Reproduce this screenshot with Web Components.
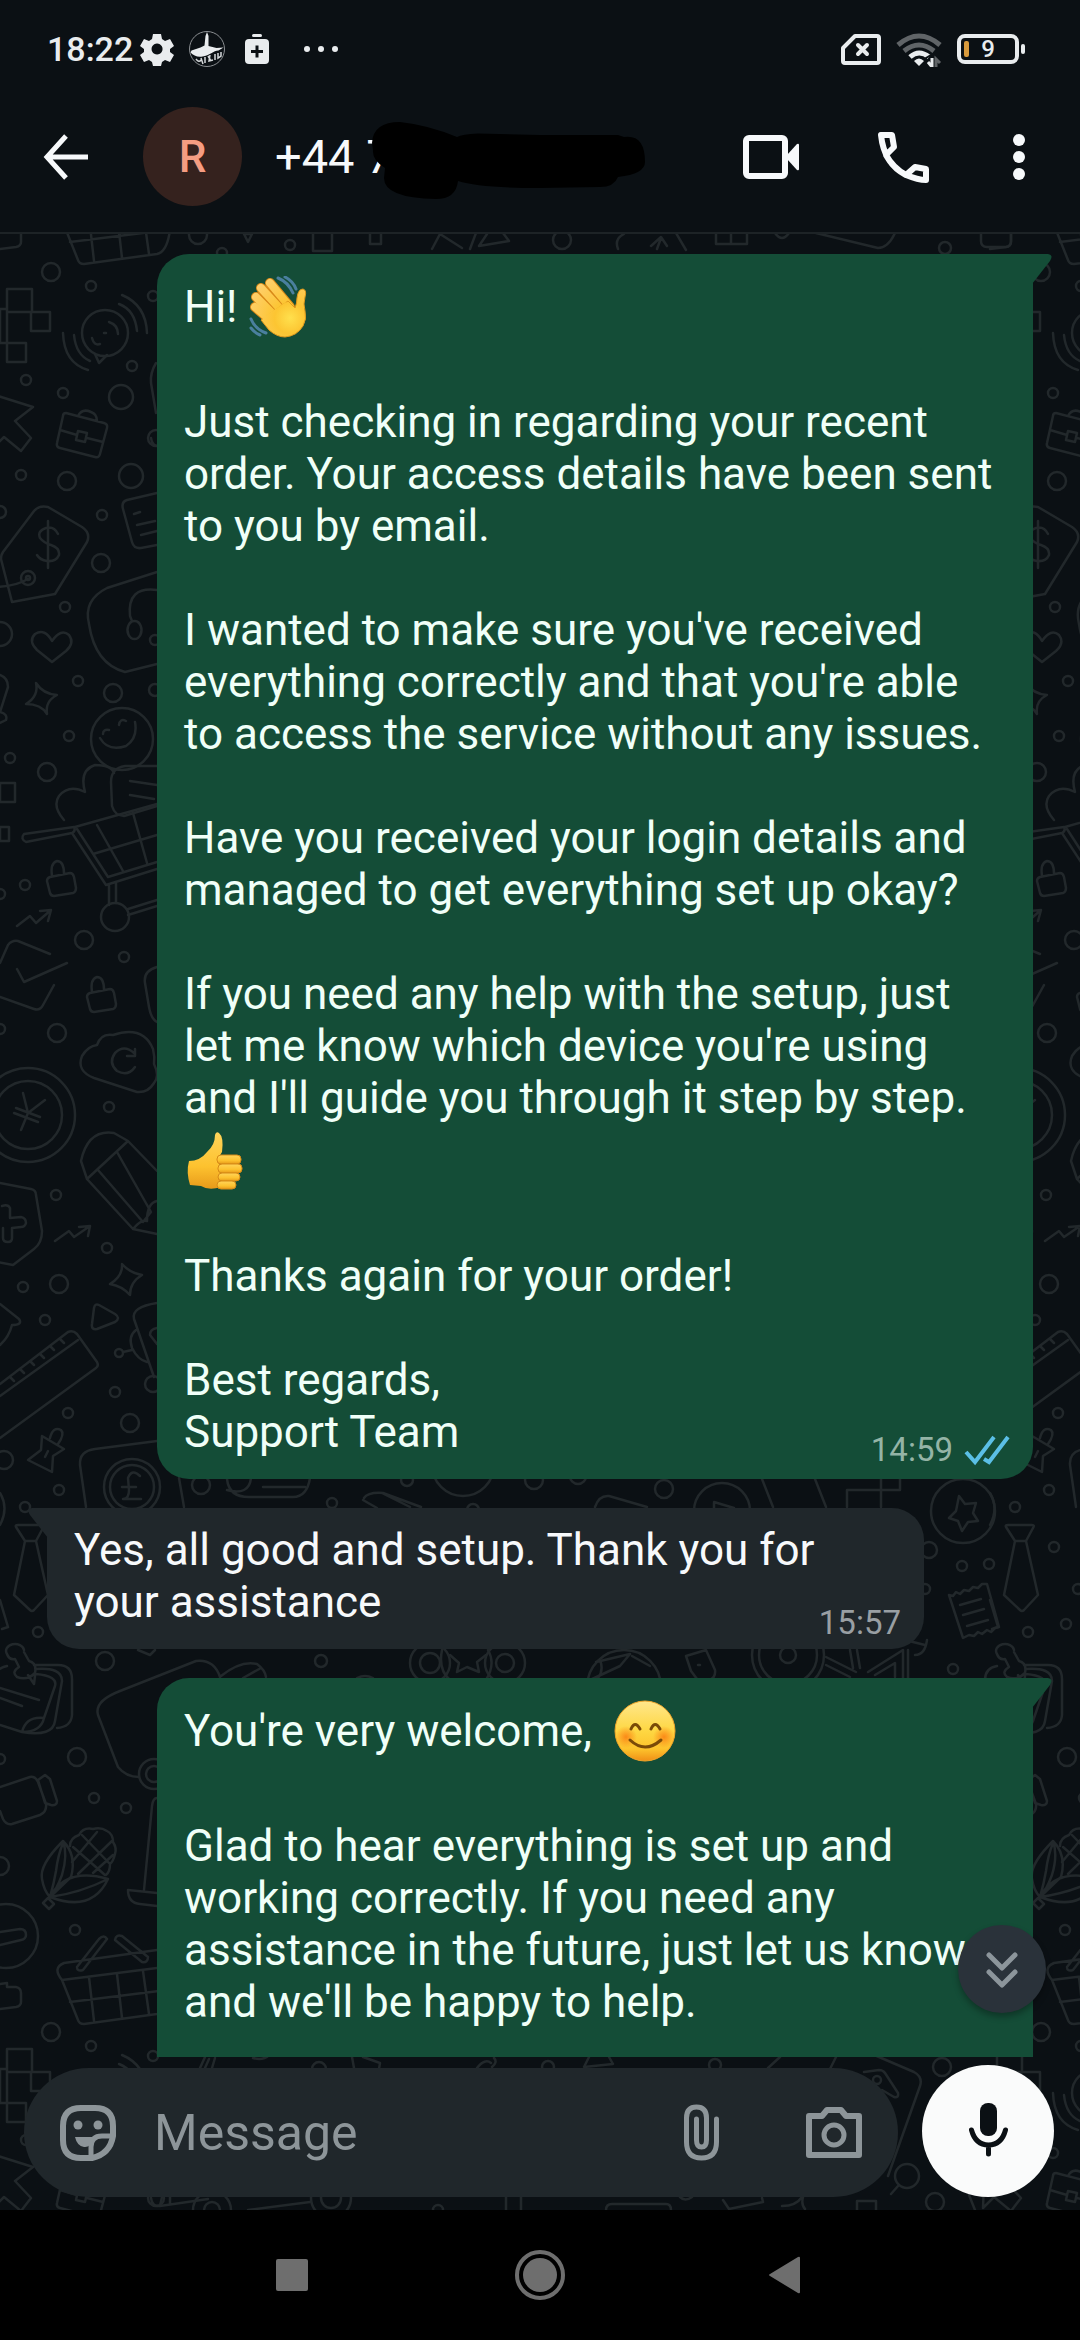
<!DOCTYPE html>
<html lang="en">
<head>
<meta charset="utf-8">
<meta name="viewport" content="width=device-width, initial-scale=1">
<title>Chat</title>
<style>
  body {
    margin: 0;
    height: 100vh;
    display: flex;
    flex-direction: column;
    background: #0b1014;
    color: #f7f9fb;
    font-family: Roboto, "Noto Sans", sans-serif;
    overflow: hidden;
  }
</style>
</head>
<body>
<status-bar time="18:22" battery="9"></status-bar>
<chat-header initial="R">+44 7</chat-header>
<chat-room>
  <chat-bubble mine time="14:59">
    <p>Hi! <chat-emoji name="wave"></chat-emoji></p>
    <p>Just checking in regarding your recent order. Your access details have been sent to you by email.</p>
    <p>I wanted to make sure you've received everything correctly and that you're able to access the service without any issues.</p>
    <p>Have you received your login details and managed to get everything set up okay?</p>
    <p>If you need any help with the setup, just let me know which device you're using and I'll guide you through it step by step. <chat-emoji name="thumb"></chat-emoji></p>
    <p>Thanks again for your order!</p>
    <p>Best regards,<br>Support Team</p>
  </chat-bubble>
  <chat-bubble time="15:57">
    <p>Yes, all good and setup. Thank you for your assistance</p>
  </chat-bubble>
  <chat-bubble mine open>
    <p>You're very welcome,&nbsp; <chat-emoji name="smile"></chat-emoji></p>
    <p>Glad to hear everything is set up and working correctly. If you need any assistance in the future, just let us know and we'll be happy to help.</p>
  </chat-bubble>
  <message-composer slot="composer"></message-composer>
</chat-room>
<nav-bar></nav-bar>

<script>
const icons = {
  gear: [36, 36, '<path fill="#e9ecee" fill-rule="evenodd" d="M14 3h8l1 5 3 2 5-2 4 7-4 3v3l4 3-4 7-5-2-3 2-1 4h-8l-1-4-3-2-5 2-4-7 4-3v-3l-4-3 4-7 5 2 3-2zM18 12.500a5.500 5.500 0 1 0 .1 0z"/>'],
  mosque: [36, 36, '<circle cx="18" cy="18" r="17.500" fill="none" stroke="#8b8f92"/><path fill="#e9ecee" d="M16.500 5l1.500-4 1.500 4v10l8 2 7-.500-5 3c-5 0-9 5-16 6-5 1-9-1-12-4l1-2 9-3 4-2z"/><path fill="none" stroke="#d5d8da" stroke-width="1.500" d="M7 28q3 4 5 1M12 27l2 6M16 26v6M19 25l3 5M21 24l-1 6 4-1M26 23v6M29 22v5l3-2v-4"/>'],
  saver: [36, 36, '<rect x="13" y="3" width="10" height="3" rx="1.500" fill="#e9ecee"/><rect x="6" y="8" width="24" height="25" rx="4" fill="#e9ecee"/><path stroke="#0b1014" stroke-width="3" d="M18 14.500v12M12 20.500h12"/>'],
  more: [36, 36, '<g fill="#e9ecee"><circle cx="4" cy="18" r="3"/><circle cx="18" cy="18" r="3"/><circle cx="32" cy="18" r="3"/></g>'],
  sim: [40, 34, '<path fill="none" stroke="#e9ecee" stroke-width="4" stroke-linejoin="round" d="M14 4h22q2 0 2 2v23q0 2-2 2H4q-2 0-2-2V16z"/><path stroke="#e9ecee" stroke-width="4" stroke-linecap="round" d="M17 13l9 9M26 13l-9 9"/>'],
  wifi: [46, 36, '<g fill="none" stroke-width="5"><path stroke="#606467" d="M2 14Q23-4 44 14"/><path stroke="#606467" d="M8 20Q23 8 38 20"/><path stroke="#e9ecee" d="M14 26Q23 18 33 26"/></g><path fill="#e9ecee" d="M18 30q5-5 10 0l-5 5z"/><path fill="none" stroke="#0b1014" stroke-width="2" d="M30 32v-5l5-3"/><path fill="none" stroke="#e9ecee" stroke-width="3" d="M36 27v9l-4-5"/><path fill="none" stroke="#606467" stroke-width="3" d="M40 36v-8l4 4"/>'],
  back: [60, 60, '<path fill="none" stroke="currentColor" stroke-width="5" stroke-linejoin="miter" d="M31 9L12 30l19 21M11 30h42"/>'],
  video: [64, 60, '<rect x="7" y="11" width="39" height="38" rx="3" fill="none" stroke="currentColor" stroke-width="6"/><path fill="currentColor" d="M48 28l10-11q2-1 2 1v24q0 2-2 1L48 32z"/>'],
  phone: [64, 60, '<path fill="none" stroke="currentColor" stroke-width="6" stroke-linejoin="round" d="M10 8h11l2 12-8 8q7 13 20 20l9-8 11 2v11q-8 0-20-5Q13 37 10 8z"/>'],
  dots: [64, 60, '<g fill="currentColor"><circle cx="32" cy="13" r="6"/><circle cx="32" cy="30" r="6"/><circle cx="32" cy="47" r="6"/></g>'],
  ticks: [46, 44, '<path fill="none" stroke="#5bbfe6" stroke-width="4" d="M2 24l9 10L30 9M20 31l5 3L44 9"/>'],
  down: [44, 44, '<path fill="none" stroke="#8c959b" stroke-width="5" stroke-linecap="round" stroke-linejoin="round" d="M9 8l13 13L35 8M9 25l13 13 13-13"/>'],
  sticker: [56, 58, '<path fill="none" stroke="currentColor" stroke-width="6" stroke-linejoin="round" d="M21 4h14q18 0 18 18v10Q50 50 32 54H21Q3 54 3 36V22Q3 4 21 4z"/><path fill="none" stroke="currentColor" stroke-width="5" d="M31 54V43q0-11 11-11h11"/><circle cx="18" cy="21" r="4.500" fill="currentColor"/><circle cx="38" cy="21" r="4.500" fill="currentColor"/><path fill="currentColor" d="M15 33h18q2 0 1 2-4 9-10 8-7-1-9-10z"/>'],
  clip: [56, 58, '<path fill="none" stroke="currentColor" stroke-width="5" stroke-linecap="round" d="M42.500 15v23q0 16-15 16t-15-16V14q0-11 10-11t10 11v22q0 7-5 7t-5-7V15"/>'],
  camera: [56, 58, '<path fill="none" stroke="currentColor" stroke-width="6" stroke-linejoin="round" d="M3 12h13l5-6h14l5 6h13v39H3z"/><circle cx="28" cy="31" r="10" fill="none" stroke="currentColor" stroke-width="5"/>'],
  mic: [44, 56, '<rect x="14" y="0" width="17" height="33" rx="8" fill="currentColor"/><path fill="none" stroke="currentColor" stroke-width="5" stroke-linecap="round" d="M5.500 27q4 15 17 15t17-15M22.500 42v9"/>'],
  square: [50, 50, '<rect x="9" y="9" width="32" height="32" rx="2" fill="currentColor"/>'],
  circle: [50, 50, '<circle cx="25" cy="25" r="23" fill="none" stroke="currentColor" stroke-width="4"/><circle cx="25" cy="25" r="17" fill="currentColor"/>'],
  triangle: [50, 50, '<path fill="currentColor" d="M7 24L35 7q2-1 2 1v34q0 2-2 1L7 26q-2-1 0-2z"/>'],
};

function icon(name) {
  const [w, h, body] = icons[name];
  return `<svg width="${w}" height="${h}" viewBox="0 0 ${w} ${h}" aria-hidden="true">${body}</svg>`;
}

const buttonReset = `
  button {
    display: flex;
    align-items: center;
    justify-content: center;
    margin: 0;
    padding: 0;
    border: 0;
    background: none;
    color: inherit;
    font: inherit;
  }
  svg { display: block; flex: none; }
`;

function render(host, html) {
  const template = document.createElement('template');
  template.innerHTML = html;
  host.attachShadow({ mode: 'open' }).appendChild(template.content.cloneNode(true));
}

class StatusBar extends HTMLElement {
  constructor() {
    super();
    render(this, `
      <style>
        :host {
          display: flex;
          justify-content: space-between;
          align-items: center;
          height: 64px;
          padding: 17px 55px 0 47px;
          color: #e9ecee;
        }
        div { display: flex; align-items: center; }
        svg { display: block; }
        .left { gap: 14px; }
        .clock { font-size: 34px; line-height: 40px; font-weight: 500; margin-right: -8px; }
        .left svg:last-child { margin-left: 14px; }
        .right { gap: 15px; }
        .level {
          box-sizing: border-box;
          width: 62px;
          height: 30px;
          border: 4px solid #e9ecee;
          border-radius: 8px;
          padding-left: 3px;
        }
        .level i { width: 5px; height: 16px; border-radius: 2px; background: #d99a3c; }
        .level span { flex: 1; text-align: center; font-size: 24px; line-height: 24px; font-weight: 500; padding-right: 8px; }
        .nub { width: 4px; height: 10px; border-radius: 2px; background: #e9ecee; margin-left: 2px; }
      </style>
      <div class="left">
        <span class="clock">${this.getAttribute('time')}</span>
        ${icon('gear')}${icon('mosque')}${icon('saver')}${icon('more')}
      </div>
      <div class="right">
        ${icon('sim')}${icon('wifi')}
        <div><div class="level"><i></i><span>${this.getAttribute('battery')}</span></div><div class="nub"></div></div>
      </div>
    `);
  }
}

class ChatHeader extends HTMLElement {
  constructor() {
    super();
    render(this, `
      <style>
        ${buttonReset}
        :host {
          display: flex;
          align-items: center;
          height: 151px;
          padding: 0 29px 0 35px;
          border-bottom: 2px solid #1d2326;
        }
        .avatar {
          width: 99px;
          height: 99px;
          margin: 0 33px 0 48px;
          border-radius: 50%;
          background: #35221e;
          color: #f59d82;
          display: grid;
          place-items: center;
          font-size: 44px;
          font-weight: 500;
        }
        h1 {
          position: relative;
          flex: 1;
          margin: 0;
          font-size: 47px;
          line-height: 56px;
          font-weight: 400;
        }
        h1 svg { position: absolute; left: 96px; top: -8px; }
        .video { margin-right: 68px; }
        .phone { margin-right: 52px; }
      </style>
      <button aria-label="Back">${icon('back')}</button>
      <div class="avatar">${this.getAttribute('initial')}</div>
      <h1><slot></slot><svg width="276" height="80" viewBox="371 121 276 80" aria-hidden="true">
        <path d="M372 143Q373 122 400 122Q428 125 457 137Q462 134 478 133.500L540 135H618L624 137Q645 134 645 162Q645 174 618 177Q614 187 600 187L540 188Q480 188 458 181Q456 199 436 199Q384 198 384 178L385 168Q372 160 373 150z"/>
      </svg></h1>
      <button class="video" aria-label="Video call">${icon('video')}</button>
      <button class="phone" aria-label="Call">${icon('phone')}</button>
      <button aria-label="More options">${icon('dots')}</button>
    `);
  }
}

// doodles repeat every 990 x 1760; [cx, cy, r]
const bubbles = [
  [51, 272, 9], [91, 286, 5], [153, 296, 5], [132, 366, 5], [26, 380, 5], [63, 393, 5], [121, 397, 12],
  [21, 475, 5], [67, 481, 9], [131, 476, 12], [0, 512, 6], [102, 515, 5], [101, 563, 9], [65, 607, 5],
  [0, 634, 12], [78, 681, 5], [113, 693, 9], [69, 736, 5], [10, 758, 5], [47, 772, 9], [155, 640, 5],
  [155, 690, 6], [156, 438, 8], [290, 245, 5], [198, 235, 9], [222, 253, 5], [562, 240, 9], [945, 248, 6],
  [25, 885, 5], [0, 894, 5], [84, 940, 9], [124, 957, 5], [0, 1029, 5], [57, 1033, 9], [109, 1107, 5],
  [56, 1195, 5], [107, 1248, 5], [23, 1287, 5], [59, 1284, 9], [45, 1320, 5], [119, 1353, 4], [115, 1392, 5],
  [68, 1413, 5], [130, 1423, 9], [4, 1460, 9], [59, 1490, 5], [153, 1384, 8], [201, 1485, 9], [332, 1503, 5],
  [407, 1480, 6], [473, 1510, 6], [534, 1480, 9], [664, 1489, 9], [578, 1476, 8], [25, 1507, 5], [64, 1547, 5],
  [962, 1566, 5], [989, 1564, 5], [929, 1550, 8], [925, 1589, 5], [76, 1624, 5], [38, 1632, 5], [88, 1589, 5],
  [953, 1669, 5], [105, 1661, 9], [77, 1757, 9], [0, 1759, 5], [94, 1798, 5], [126, 1808, 5], [0, 1866, 9],
  [75, 1930, 5], [105, 333, 23], [28, 578, 7], [28, 578, 2], [122, 739, 31], [115, 917, 14], [28, 1115, 47],
  [28, 1115, 34], [132, 1487, 28], [132, 1487, 22], [463, 1465, 31], [722, 1511, 28], [963, 1511, 32],
  [321, 1661, 6], [430, 1663, 20], [430, 1663, 10], [505, 1663, 20], [505, 1663, 9], [624, 1687, 37],
  [788, 1655, 36], [788, 1655, 29], [788, 1655, 8], [154, 1774, 15], [154, 1774, 8], [6, 1936, 32],
  [319, 309, 7], [212, 450, 19], [212, 450, 8], [331, 438, 20], [331, 438, 10], [438, 450, 5], [548, 307, 6],
  [715, 305, 6], [942, 307, 9], [877, 320, 4], [907, 416, 12], [935, 442, 9],
];

const doodles = [
  // top strip
  'M244 234h8l-4 8zM313 233v18h19v-18M370 233v11h11v-11M432 249l8-15 22 14M470 249l6-16M479 246l8-12M479 246l30-5-6-8',
  'M618 249q-4-10 6-15M651 246l10-9 6 9M661 238l-4 11M676 233l10 17M716 233v11h31v-11M731 233v11M775 233q7 10 14 0M816 233l62 15q10 0 17-15M981 233v8q0 6 6 6h19q5 0 5-6v-8',
  // plus tiles, voice note, cursor
  'M7 289h25v23H7zM31 312h19v19H31zM7 343h19v19H7zM0 309h7M0 343h7M7 312v31M-12 309H0v34h-12z',
  'M95 354l4 9 8-8M92 338q2 8 8 6M109 322q9 3 9 12M104 333h2M122 295q24 10 25 38M119 304q16 6 18 27M63 333q1 30 25 37M74 335q2 20 16 26',
  'M-21 435l6 15M-5 395l38 12-18 14 16 17-10 13-17-14-11 11z',
  // briefcase
  'M66 413l38 10q4 1 3 5l-7 26q-1 4-5 3l-35-9q-4-1-3-5l6-27q0-3 3-3zM78 416q4-8 13-4 6 2 6 9M60 430l17 5M87 438l16 4M78 431l9 2-2 9-9-2z',
  'M156 363q-6 10-5 20l5 30',
  // price tag
  'M34 511q5-6 14-4l34 20q9 6 5 15l-32 52-43 8-11-43q0-4 2-7zM58 534q-4-8-12-6-9 3-6 10 4 5 11 7 9 3 8 10-3 7-12 6-7-1-10-6M48 521v47M-6 587q20 0 34-8',
  'M157 493l-30 7q-6 2-4 9l9 33q2 7 9 6l16-3M134 514l6-2M137 525l18-4M141 535l16-4',
  'M157 572l-50 16q-24 12-18 36 6 40 36 48l32-8M157 590q-30-4-27 26l2 5M134 621a7 9 0 1 0 1 0',
  'M52 662l-15-12q-9-9-2-16 10-6 17 7 9-13 17-6 6 8-3 16zM36 683q7 11 21 12-12 6-10 19-6-10-21-10 13-8 10-21z',
  'M0 675q8 3 8 12L0 712q8 2 6 8l-6 3',
  // smiling face, heart, glove
  'M100 738q8 14 26 8 12-8 9-24M103 734q0-5 6-4M119 725q1-7 7-4M64 820q-12-14-5-24 10-12 26-4-6-22 10-27 16 0 19 8M157 766l-32 0q-14 2-14 16l1 24q3 10 12 10l33-10M130 781l27 4M130 795l24 4M0 783h15v19H0zM0 827h9v14H0z',
  // shopping cart
  'M26 842l46-9q4-2 2-6l-50 7q-4 5 2 8zM72 833l34 52 51-16M77 829l31 48 49-15M75 827l82-23M97 825l26 46M133 813l14 50M93 854l64-19M109 885v20M116 883v20M128 909l29-9M128 915l29-9',
  'M50 877l20-4q3 0 4 4l2 11q0 4-3 5l-19 3q-3 0-4-3l-3-12q0-3 3-4zM52 876q-2-13 5-15 7 0 7 13',
  'M90 993l20-4q3 0 4 4l2 11q0 4-3 5l-19 3q-3 0-4-3l-3-12q0-3 3-4zM92 992q-2-13 5-15 7 0 7 13',
  'M17 926l13-10 6 7 15-13M40 911l11-1-3 11M55 1241l14-10 5 6 16-11M79 1227l11-1-2 10',
  'M0 963l8-18q4-5 10-4l32 13M17 969l7 13 43-19M0 997l34 12q6 2 9-4l11-20M157 967q-14 4-12 16l4 24q2 12 8 15',
  'M97 1045q4-12 16-10 30-10 40 14 2 8 1 15 6 12 0 19-6 10-17 9l-43-14q-18-7-12-22 6-10 15-11zM134 1053q-10-9-19 0-7 10 2 18 11 6 18-4M135 1049v7h-8',
  'M23 1093l5 20 17-13M28 1113l-7 17M14 1113l24 9M16 1108l24 9',
  'M0 1183l31 6q5 1 5 6l6 36q0 12-8 18l-21 16-15-3M2 1206q6-2 8 2v10l11-1q5 1 5 6-1 4-5 4l-9 1v10q0 4-4 4-5 0-5-4v-10',
  // pencil
  'M128 1141l-14-8q-26-4-33 28l6 18zM128 1141l29 30M117 1152l34 60-8 10-45-52M87 1179l46 50 24 5M133 1229q8-10 14-8 0-18 10-20',
  'M122 1264q8 9 20 11-12 7-12 20-8-9-20-11 13-8 12-20zM99 1305l16 9q6 4 0 8l-18 7q-6 1-5-5l2-16q1-5 5-3z',
  'M0 1304l19 15q4 6-7 6-3 12-12 20M0 1384l68-52q5-2 9 2l20 28q2 4-1 6L0 1438M0 1396l78-56M10 1377l4 4M20 1369l4 4M30 1361l4 4M40 1354l4 4M50 1346l4 4M60 1339l4 4',
  'M157 1303q-26 4-23 16l20 58M136 1330q-8 6-4 18 6 12 15 14M123 1352l9-2M150 1335q0-6 7-7M150 1335l7 9',
  'M28 1460l13-10 1-14 22 13-11 7-1 16zM50 1438q3-12 11-8 4 4-3 14M45 1457l3-6',
  'M157 1441l-62 8q-16 2-15 16l6 42M179 1478l5 29M140 1476q-8-8-12 2l1 12q0 9-6 9h18M122 1487h14',
  // between the messages
  'M227 1479q2 19 24 18h42q14 0 17-19M227 1490q22 6 24-12M263 1487h42M363 1500l14 8M364 1498q4-6 19-5l38 14M382 1493l28 14M595 1507q4-12 14-11l38 11M714 1503v8M714 1502l20 6M762 1479l11 28M815 1479l11 28M847 1507v-17h53v-11M881 1479v28',
  'M959 1496l6 8 11-1-3 10 5 8-10 1-6 9-4-10-9-3 7-7z',
  'M16 1527q-1-2 2-2h24q3 0 1 3l-7 13H25zM25 1541l-11 54 16 15q2 2 4 0l14-15-12-54M0 1493q9 15 0 32M0 1600l8 27-6 2',
  'M949 1595l4 1 3-4 4 2 4-4 5 1 4-4 5 1 4-4 5 0 12 43-4 1-4 4-4-2-5 4-4-2-4 4-5-1-6 3zM960 1605l21-6M963 1615l21-6M967 1626l21-6',
  'M24 1650a9 7 0 1 0-17 4q2 6 8 5l4 8q-8 5-2 10 10 4 18-4 2-10-6-12l-5-9M28 1675l6 9 1-8M-5 1680q0-12 12-14M34 1665h24q14 0 14 14v36q-1 12-15 13M36 1669q26-2 26 12l-7 40q-2 16-33 11M36 1674q22 2 19 12l-11 32q-3 14-22 14L0 1725M22 1732q4-16 22-14M0 1688l39 12M0 1698l22 8',
  'M220 1677q-6-18-24-16l-76 30q-26 10-22 24l20 52q8 10 21 10M221 1676q20-16 36-12 8 6 9 13M243 1678l18-10M138 1650l12 5 5-5M442 1650q-4 20 8 30M488 1650q8 14-2 30M450 1655l9 8-2 9 10-5 12 5-2-10 9-7M357 1678q8-4 16 0M596 1662l34-8M630 1654l-10 12-30 14M632 1656l18 10M600 1660q4 10-2 18',
  'M686 1656l20-6 9 20q1 8-6 10l-12-1-6-8zM698 1665h2M826 1657l30 15M826 1665l24 12M850 1650l3 18M857 1650l3 18M868 1672l35-22v28M875 1675l20-12v14M908 1650v28M915 1655q10 0 12-15M905 1640l20 5',
  // bottle, corn, blender, basket
  'M0 1787l30-10q5-1 8 5l8 22q1 8-6 11l-28 9q-6 1-9-5l-3-8M38 1780l7-5 5 4 7 22q0 5-6 4l-6-2z',
  'M63 1841q-24 24-21 38 2 12 8 18 6-6 12-22 6-20 1-34zM50 1897q4-14 6-26 2-16 7-28M63 1841q14 14 8 36l-21 20q16-30 58-18-16 34-58 18 30-4 58-18M43 1903l5-5 6 6-5 5z',
  'M70 1846q0-8 9-11 4-8 14-6 8-2 14 2 6 3 6 11 4 6 2 12-2 8-5 10 0 8-4 11M73 1847l32 28M82 1835l28 29M72 1862l25-30M78 1874l35-34M93 1873l20-18',
  'M157 1798q-4 0-5 8l-8 84M157 1893l-29-3q0 13 12 14l17 2M0 1932l20-3q6 0 6 6 0 4-5 5L0 1945',
  'M0 1984l7-1v4h9q5 1 5 6v9q0 4-5 5L0 2009M107 1939q-3-5-8 0l-22 28q0 5 6 3zM115 1940q1-6 7-4l26 21q0 6-6 5zM62 1980q-10-12 2-17l93-13M62 1980l16 40q1 4 6 4l73-10q10-2 13-24M62 1980l95-12M70 2002l97-12M89 1977l5 44M117 1974l5 44M143 1971l6 43',
  // around the composer
  'M200 308l5-11M205 308l4-9M212 308l3-10M253 298q10 3 16-3M352 297l2 11M363 297l17 6-1 6M477 308q8-10 14-5M492 307q6-5 2-9M589 297l-5 10 29-3-4-7M768 308l12-11M836 297l-7 14M872 294l42 18q9 5 6 14l-32 90M864 312l15-2q4 0 6 3l13 20q1 5-4 4l-12-7',
  'M151 438q1 9 9 8l48-7M160 446l2-9M170 444v-8M248 450l62-8M506 437v13M521 437v13M606 450q0-6 6-6h54q5 0 5 6M680 437q5 5 12 0M723 440l6 9 34-7-1-4M782 446q14 0 20-9M803 437q-2 8 2 12M857 450v-9h19v9M898 426l-7 8',
];

class ChatWallpaper extends HTMLElement {
  constructor() {
    super();
    const tile = bubbles.map(([x, y, r]) => `<circle cx="${x}" cy="${y}" r="${r}"/>`).join('')
      + doodles.map((d) => `<path d="${d}"/>`).join('');
    render(this, `
      <style>
        :host { display: block; }
        svg { display: block; width: 100%; height: 100%; }
      </style>
      <svg aria-hidden="true">
        <g transform="translate(0 -234)" fill="none" stroke="#22282b" stroke-width="2.500" stroke-linecap="round" stroke-linejoin="round">
          <g id="tile">${tile}</g>
          <use href="#tile" x="990"/>
          <use href="#tile" y="1760"/>
          <use href="#tile" x="990" y="1760"/>
          <use href="#tile" y="-1760"/>
          <use href="#tile" x="990" y="-1760"/>
        </g>
      </svg>
    `);
  }
}

class ChatRoom extends HTMLElement {
  constructor() {
    super();
    render(this, `
      <style>
        ${buttonReset}
        :host {
          flex: 1;
          min-height: 0;
          display: flex;
          flex-direction: column;
          position: relative;
        }
        chat-wallpaper { position: absolute; inset: 0; }
        main { flex: 1; min-height: 0; position: relative; }
        .list {
          height: 100%;
          box-sizing: border-box;
          padding-top: 20px;
          display: flex;
          flex-direction: column;
          gap: 29px;
          overflow: hidden;
        }
        .jump {
          position: absolute;
          right: 34px;
          bottom: 44px;
          width: 88px;
          height: 88px;
          border-radius: 50%;
          background: #2a323a;
          box-shadow: 0 4px 6px rgba(0, 0, 0, .3);
        }
      </style>
      <chat-wallpaper></chat-wallpaper>
      <main>
        <div class="list"><slot></slot></div>
        <button class="jump" aria-label="Scroll to bottom">${icon('down')}</button>
      </main>
      <slot name="composer"></slot>
    `);
  }
}

class ChatBubble extends HTMLElement {
  constructor() {
    super();
    const time = this.getAttribute('time');
    const ticks = this.hasAttribute('mine') ? icon('ticks') : '';
    const meta = time ? `<div class="meta"><time>${time}</time>${ticks}</div>` : '';
    render(this, `
      <style>
        :host {
          flex: none;
          display: grid;
          position: relative;
          margin: 0 156px 0 47px;
          border-radius: 0 32px 32px 32px;
          background: #20272b;
          font-size: 44px;
          line-height: 52px;
        }
        :host([mine]) {
          margin: 0 47px 0 157px;
          border-radius: 32px 0 32px 32px;
          background: #144d37;
          color: #f0fff8;
        }
        :host([open]) { padding-bottom: 52px; }
        :host::before {
          content: "";
          position: absolute;
          top: 0;
          left: -19px;
          width: 20px;
          height: 30px;
          background: inherit;
          clip-path: path("M20 0H4Q-2 1 2 7L20 30z");
        }
        :host([mine])::before {
          left: auto;
          right: -19px;
          clip-path: path("M0 0H16Q22 1 18 7L0 30z");
        }
        .text, .meta { grid-area: 1 / 1; }
        .text {
          display: flex;
          flex-direction: column;
          gap: 52px;
          padding: 16px 33px 21px 27px;
        }
        ::slotted(p) { margin: 0; }
        .meta {
          align-self: end;
          justify-self: end;
          display: flex;
          align-items: center;
          gap: 11px;
          padding: 0 23px 7px 0;
          font-size: 33px;
          line-height: 38px;
          color: #999fa3;
        }
        :host([mine]) .meta { color: #94b4a6; }
        svg { display: block; }
      </style>
      <div class="text"><slot></slot></div>
      ${meta}
    `);
  }
}

const emojis = {
  wave: ['waving hand', `
    <defs><radialGradient id="g" gradientUnits="userSpaceOnUse" cx="42" cy="42" r="44">
      <stop offset="0" stop-color="#ffe04d"/><stop offset=".35" stop-color="#fcc532"/><stop offset="1" stop-color="#ffcf6b"/>
    </radialGradient></defs>
    <g fill="none" stroke-linecap="round">
      <g stroke="#d98a18" stroke-width="10"><path d="M22 7l20 24M13 12l22 24M8 21l22 22M7 31l20 17"/></g>
      <g stroke="url(#g)" stroke-width="8"><path d="M22 7l20 24"/><path d="M13 12l22 24"/><path d="M8 21l22 22"/><path d="M7 31l20 17"/></g>
      <path stroke="#4a7f9e" stroke-width="3" d="M30 2q10 4 15 15M37 1q8 4 11 12M3 43q4 10 15 14M3 52q4 5 9 7"/>
    </g>
    <path fill="url(#g)" stroke="#e09a1c" d="M40 25l7 7q2-5 2-10 1-9 6-9 4 1 2 8-2 7 0 14 2 8-2 15-6 10-18 11-8 0-16-7L13 44z"/>
    <path fill="url(#g)" d="M38 26l8 8-20 18-12-10z"/>`],
  thumb: ['thumbs up', `
    <defs><linearGradient id="g" x1="0" y1="0" x2="0" y2="1">
      <stop offset="0" stop-color="#ffd45a"/><stop offset=".6" stop-color="#fdc22f"/><stop offset="1" stop-color="#e89a1a"/>
    </linearGradient></defs>
    <path fill="url(#g)" d="M5 31q11 0 18-9 8-7 8-17 1-4 4-2 5 4 3 19l-3 5 2 30q-12 4-20-1L6 55Q2 42 5 31z"/>
    <g fill="url(#g)" stroke="#d68a17" stroke-width="1">
      <rect x="33" y="25" width="24" height="9" rx="4"/><rect x="34" y="34" width="24" height="9" rx="4"/>
      <rect x="34" y="43" width="22" height="8" rx="4"/><rect x="33" y="51" width="19" height="8" rx="4"/>
    </g>`],
  smile: ['smiling face', `
    <defs><linearGradient id="g" x1="0" y1="0" x2="0" y2="1">
      <stop offset="0" stop-color="#ffe78c"/><stop offset=".5" stop-color="#fed742"/><stop offset=".8" stop-color="#fdc32c"/><stop offset="1" stop-color="#f08f16"/>
    </linearGradient><radialGradient id="c"><stop offset="0" stop-color="#fb8a18"/><stop offset="1" stop-color="#fb8a18" stop-opacity="0"/></radialGradient></defs>
    <circle cx="31" cy="31" r="30" fill="url(#g)" stroke="#f0a52a"/>
    <circle cx="12" cy="37" r="11" fill="url(#c)"/><circle cx="50" cy="37" r="11" fill="url(#c)"/>
    <g fill="none" stroke="#7a4a08" stroke-width="3" stroke-linecap="round">
      <path d="M17 29q4-9 9 0M37 29q4-9 9 0"/><path d="M16 40q15 14 31 0"/>
    </g>`],
};

class ChatEmoji extends HTMLElement {
  constructor() {
    super();
    const [label, body] = emojis[this.getAttribute('name')];
    // the baseline is the bottom of the drawing, 6px above the box
    render(this, `
      <style>
        :host { display: inline-grid; align-items: center; height: 74px; vertical-align: -16px; }
        svg { display: block; }
      </style>
      <svg width="62" height="62" viewBox="0 0 62 62" role="img" aria-label="${label}">${body}</svg>
    `);
  }
}

class MessageComposer extends HTMLElement {
  constructor() {
    super();
    render(this, `
      <style>
        ${buttonReset}
        :host {
          position: relative;
          display: flex;
          align-items: flex-end;
          gap: 24px;
          padding: 8px 26px 13px 24px;
        }
        .field {
          flex: 1;
          min-width: 0;
          height: 129px;
          box-sizing: border-box;
          display: flex;
          align-items: center;
          padding: 0 36px;
          border-radius: 65px;
          background: #20272b;
          color: #8d9599;
        }
        input {
          flex: 1;
          min-width: 0;
          margin: 0 38px;
          padding: 0;
          border: 0;
          outline: 0;
          background: none;
          color: #f7f9fb;
          font: 50px/60px Roboto, "Noto Sans", sans-serif;
        }
        input::placeholder { color: #8d9599; opacity: 1; }
        .camera { margin-left: 76px; }
        .mic {
          width: 132px;
          height: 132px;
          border-radius: 50%;
          background: #fafbfb;
          color: #0b1014;
        }
      </style>
      <div class="field">
        <button aria-label="Stickers">${icon('sticker')}</button>
        <input type="text" placeholder="Message" aria-label="Message">
        <button aria-label="Attach">${icon('clip')}</button>
        <button class="camera" aria-label="Camera">${icon('camera')}</button>
      </div>
      <button class="mic" aria-label="Record voice message">${icon('mic')}</button>
    `);
  }
}

class NavBar extends HTMLElement {
  constructor() {
    super();
    render(this, `
      <style>
        ${buttonReset}
        :host {
          display: flex;
          height: 130px;
          padding: 0 168px;
          background: #000;
          color: #6e6e6e;
        }
        button { flex: 1; }
      </style>
      <button aria-label="Recent apps">${icon('square')}</button>
      <button aria-label="Home">${icon('circle')}</button>
      <button aria-label="Back">${icon('triangle')}</button>
    `);
  }
}

customElements.define('status-bar', StatusBar);
customElements.define('chat-header', ChatHeader);
customElements.define('chat-wallpaper', ChatWallpaper);
customElements.define('chat-room', ChatRoom);
customElements.define('chat-emoji', ChatEmoji);
customElements.define('chat-bubble', ChatBubble);
customElements.define('message-composer', MessageComposer);
customElements.define('nav-bar', NavBar);
</script>
</body>
</html>
